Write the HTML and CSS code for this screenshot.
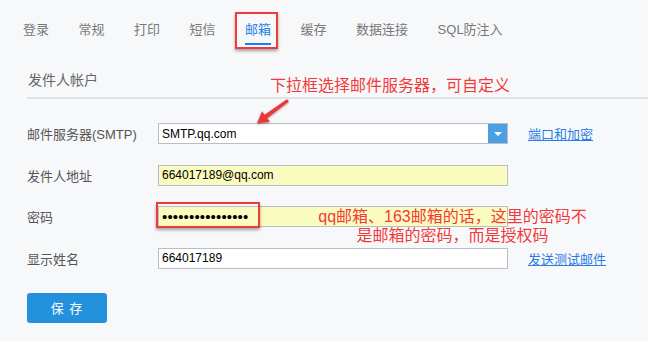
FILE: index.html
```html
<!DOCTYPE html>
<html lang="zh-CN">
<head>
<meta charset="utf-8">
<title>邮箱设置</title>
<link rel="stylesheet" href="styles.css">
</head>
<body>
<div class="page">
  <nav class="tabs">
    <span class="tab">登录</span>
    <span class="tab">常规</span>
    <span class="tab">打印</span>
    <span class="tab">短信</span>
    <span class="tab active">邮箱</span>
    <span class="tab">缓存</span>
    <span class="tab">数据连接</span>
    <span class="tab">SQL防注入</span>
  </nav>

  <section class="panel">
    <h2 class="section-title">发件人帐户</h2>
    <form class="form">
      <div class="row">
        <label class="label">邮件服务器(SMTP)</label>
        <div class="select">
          <input class="field select-input" type="text" value="SMTP.qq.com" readonly>
          <span class="select-btn"><span class="caret"></span></span>
        </div>
        <a class="link" href="#">端口和加密</a>
      </div>
      <div class="row">
        <label class="label">发件人地址</label>
        <input class="field filled" type="text" value="664017189@qq.com" readonly>
      </div>
      <div class="row">
        <label class="label">密码</label>
        <input class="field filled password" type="password" value="aaaaaaaaaaaaaaaa" readonly>
      </div>
      <div class="row">
        <label class="label">显示姓名</label>
        <input class="field" type="text" value="664017189" readonly>
        <a class="link" href="#">发送测试邮件</a>
      </div>
    </form>
    <button class="save" type="button">保 存</button>
  </section>

  <div class="mark mark-tab"></div>
  <div class="mark mark-pwd"></div>
  <div class="note note-top">下拉框选择邮件服务器，可自定义</div>
  <div class="note note-pwd">qq邮箱、163邮箱的话，这里的密码不<br>是邮箱的密码，而是授权码</div>
  <svg class="arrow" width="648" height="342" viewBox="0 0 648 342">
    <polygon points="286.2,99.8 264.6,114.7 262.0,111.2 257,123.5 270.0,121.8 267.2,118.3 287.8,102.2" fill="#ef3535"/>
    <circle cx="287" cy="101" r="1.5" fill="#ef3535"/>
  </svg>
</div>
</body>
</html>
```

FILE: styles.css
```css
html, body {
  margin: 0;
  padding: 0;
  background: #f7f8fa;
}

body {
  font-family: "Liberation Sans", "Noto Sans CJK SC", sans-serif;
  color: #555;
}

.page {
  position: relative;
  width: 648px;
  height: 342px;
  overflow: hidden;
}

.tabs {
  display: flex;
  gap: 29.5px;
  padding: 20px 0 0 23px;
}

.tab {
  font-size: 13px;
  line-height: 20px;
  color: #777;
  padding-bottom: 3px;
  border-bottom: 2px solid transparent;
}

.tab.active {
  color: #1b7fe6;
  border-bottom-color: #1b7fe6;
}

.panel {
  margin-left: 27px;
}

.section-title {
  margin: 25px 0 0;
  padding: 0 0 7px 1px;
  font-size: 14px;
  line-height: 20px;
  font-weight: normal;
  color: #666;
  border-bottom: 2px solid #e1e3e7;
}

.form {
  display: flex;
  flex-direction: column;
  gap: 20.5px;
  padding-top: 24px;
  margin: 0;
}

.row {
  display: flex;
  align-items: center;
  height: 21px;
}

.label {
  width: 131px;
  font-size: 13px;
  color: #555;
}

.field {
  box-sizing: border-box;
  width: 350px;
  height: 21px;
  margin: 0;
  padding: 0 3px;
  border: 1px solid #b9bdc8;
  border-radius: 0;
  background: #fff;
  font-family: "Liberation Sans", "Noto Sans CJK SC", sans-serif;
  font-size: 12px;
  color: #000;
  outline: none;
}

.field.filled {
  background: #fafbbf;
}

.field.password {
  font-size: 15px;
  letter-spacing: 0.15px;
}

.select {
  display: flex;
  width: 350px;
  height: 21px;
}

.select-input {
  width: 330px;
  border-right: none;
}

.select-btn {
  box-sizing: border-box;
  width: 20px;
  height: 21px;
  background: #4aa0e2;
  border: 1px solid #b9bdc8;
  border-left: none;
  display: flex;
  align-items: center;
  justify-content: center;
}

.caret {
  width: 0;
  height: 0;
  border-left: 4px solid transparent;
  border-right: 4px solid transparent;
  border-top: 4px solid #fff;
}

.link {
  margin-left: 20px;
  font-size: 13px;
  color: #2a7ce4;
  text-decoration: underline;
}

.save {
  display: block;
  margin-top: 24px;
  width: 80px;
  height: 30px;
  border: none;
  border-radius: 3px;
  background: #2391dc;
  color: #fff;
  font-family: "Liberation Sans", "Noto Sans CJK SC", sans-serif;
  font-size: 13px;
  letter-spacing: 1px;
}

/* annotations */
.mark {
  position: absolute;
  box-sizing: border-box;
  border: 2px solid #ef3b3b;
  box-shadow: 0 2px 3px rgba(0, 0, 0, 0.35);
}

.mark-tab {
  left: 235px;
  top: 12px;
  width: 43px;
  height: 37px;
}

.mark-pwd {
  left: 156px;
  top: 202px;
  width: 104px;
  height: 26px;
}

.note {
  position: absolute;
  font-size: 16px;
  color: #f23a3a;
  line-height: 19px;
}

.note-top {
  left: 270px;
  top: 76px;
}

.note-pwd {
  left: 302px;
  top: 207px;
  width: 301px;
  text-align: center;
}

.arrow {
  position: absolute;
  left: 0;
  top: 0;
  filter: drop-shadow(0 1px 1px rgba(0, 0, 0, 0.35));
  pointer-events: none;
}
```
